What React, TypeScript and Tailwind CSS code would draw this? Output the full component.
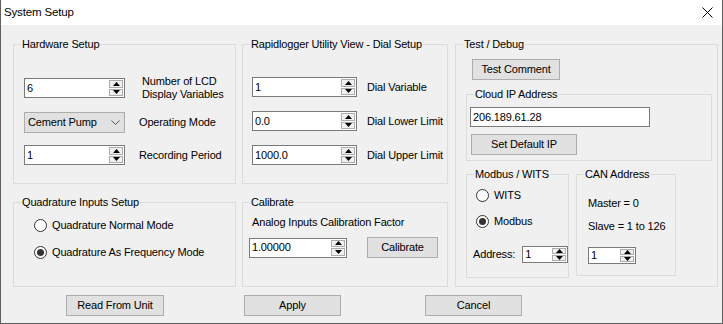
import React from 'react';

function Group({ title, className, children }: { title: string; className?: string; children?: React.ReactNode }) {
  return (
    <div className={`relative border border-[#dcdcdc] ${className ?? ''}`}>
      <span className="absolute left-[7px] -top-[8px] bg-[#f0f0f0] px-[1px] leading-[14px] whitespace-nowrap">{title}</span>
      {children}
    </div>
  );
}

function Arrow({ up }: { up?: boolean }) {
  return (
    <svg width="7" height="4" viewBox="0 0 7 4">
      <path d={up ? 'M0 4 L3.5 0 L7 4 Z' : 'M0 0 L3.5 4 L7 0 Z'} fill="#000" />
    </svg>
  );
}

function Spin({ value, className }: { value: string; className?: string }) {
  return (
    <div className={`flex border border-[#7a7a7a] bg-white ${className ?? ''}`}>
      <div className="flex-1 flex items-center pl-[2px] leading-none">{value}</div>
      <div className="flex flex-col w-[15px] py-[1px] pr-[1px] gap-[1px]">
        <div className="flex-1 flex items-center justify-center border border-[#acacac] bg-[#f0f0f0]">
          <Arrow up />
        </div>
        <div className="flex-1 flex items-center justify-center border border-[#acacac] bg-[#f0f0f0]">
          <Arrow />
        </div>
      </div>
    </div>
  );
}

function Button({ label, className }: { label: string; className?: string }) {
  return (
    <div className={`flex items-center justify-center border border-[#adadad] bg-[#e1e1e1] leading-none ${className ?? ''}`}>
      {label}
    </div>
  );
}

function Radio({ label, checked, className }: { label: string; checked?: boolean; className?: string }) {
  return (
    <div className={`flex items-center h-[13px] ${className ?? ''}`}>
      <span className="w-[13px] h-[13px] rounded-full border border-[#333] bg-white flex items-center justify-center">
        {checked && <span className="w-[7px] h-[7px] rounded-full bg-[#333]" />}
      </span>
      <span className="ml-[5px] leading-none whitespace-nowrap">{label}</span>
    </div>
  );
}

export default function App() {
  return (
    <div className="w-[723px] h-[324px] bg-[#f0f0f0] border-x border-b border-[#5f5f5f] text-[11px] tracking-[-0.15px] text-black font-['Liberation_Sans',Arial,sans-serif] overflow-hidden">
      {/* title bar */}
      <div className="h-[25px] bg-white flex items-center justify-between pl-[3px] pr-[9px]">
        <span className="text-[11.5px]">System Setup</span>
        <svg width="11" height="11" viewBox="0 0 11 11">
          <path d="M0.5 0.5 L10.5 10.5 M10.5 0.5 L0.5 10.5" stroke="#000" strokeWidth="1" />
        </svg>
      </div>

      <div className="flex pt-[19px] pl-[12px]">
        {/* left column */}
        <div className="w-[223px] flex flex-col">
          <Group title="Hardware Setup" className="h-[140px] pt-[33px] pl-[10px]">
            <div className="flex items-center h-[20px]">
              <Spin value="6" className="w-[101px] h-[20px]" />
              <div className="ml-[17px] leading-[13px]">
                <div>Number of LCD</div>
                <div>Display Variables</div>
              </div>
            </div>
            <div className="flex items-center h-[21px] mt-[14px]">
              <div className="w-[101px] h-[21px] flex items-center justify-between border border-[#adadad] bg-[#e1e1e1] pl-[3px] pr-[4px]">
                <span>Cement Pump</span>
                <svg width="9" height="5" viewBox="0 0 9 5">
                  <path d="M0.5 0.5 L4.5 4.5 L8.5 0.5" stroke="#555" fill="none" strokeWidth="1" />
                </svg>
              </div>
              <span className="ml-[14px]">Operating Mode</span>
            </div>
            <div className="flex items-center h-[20px] mt-[12px]">
              <Spin value="1" className="w-[101px] h-[20px]" />
              <span className="ml-[14px]">Recording Period</span>
            </div>
          </Group>
          <Group title="Quadrature Inputs Setup" className="mt-[18px] h-[85px] pt-[16px] pl-[20px]">
            <Radio label="Quadrature Normal Mode" />
            <Radio label="Quadrature As Frequency Mode" checked className="mt-[14px]" />
          </Group>
        </div>

        {/* middle column */}
        <div className="w-[206px] ml-[6px] flex flex-col">
          <Group title="Rapidlogger Utility View - Dial Setup" className="h-[140px] pt-[32px] pl-[9px]">
            <div className="flex items-center h-[20px]">
              <Spin value="1" className="w-[105px] h-[20px]" />
              <span className="ml-[10px]">Dial Variable</span>
            </div>
            <div className="flex items-center h-[20px] mt-[14px]">
              <Spin value="0.0" className="w-[105px] h-[20px]" />
              <span className="ml-[10px]">Dial Lower Limit</span>
            </div>
            <div className="flex items-center h-[20px] mt-[14px]">
              <Spin value="1000.0" className="w-[105px] h-[20px]" />
              <span className="ml-[10px]">Dial Upper Limit</span>
            </div>
          </Group>
          <Group title="Calibrate" className="mt-[18px] h-[85px] pt-[12px] pl-[9px]">
            <div className="leading-[14px]">Analog Inputs Calibration Factor</div>
            <div className="flex items-center h-[21px] mt-[8px] -ml-[3px]">
              <Spin value="1.00000" className="w-[98px] h-[20px]" />
              <Button label="Calibrate" className="ml-[20px] w-[71px] h-[21px]" />
            </div>
          </Group>
        </div>

        {/* right column */}
        <div className="w-[263px] ml-[7px]">
          <Group title="Test / Debug" className="h-[243px] pt-[14px] pl-[10px]">
            <Button label="Test Comment" className="ml-[6px] w-[88px] h-[21px]" />
            <Group title="Cloud IP Address" className="mt-[14px] w-[246px] h-[67px] pt-[12px] pl-[3px]">
              <div className="w-[180px] h-[20px] border border-[#7a7a7a] bg-white flex items-center pl-[2px]">206.189.61.28</div>
              <Button label="Set Default IP" className="mt-[7px] ml-[1px] w-[106px] h-[21px]" />
            </Group>
            <div className="flex mt-[13px]">
              <Group title="Modbus / WITS" className="w-[103px] h-[104px] pt-[14px] pl-[6px]">
                <Radio label="WITS" className="ml-[3px]" />
                <Radio label="Modbus" checked className="ml-[3px] mt-[13px]" />
                <div className="flex items-center h-[17px] mt-[18px]">
                  <span>Address:</span>
                  <Spin value="1" className="ml-[7px] w-[47px] h-[17px]" />
                </div>
              </Group>
              <Group title="CAN Address" className="ml-[7px] w-[100px] h-[102px] pt-[21px] pl-[11px]">
                <div className="leading-[14px]">Master = 0</div>
                <div className="leading-[14px] mt-[9px]">Slave = 1 to 126</div>
                <Spin value="1" className="mt-[14px] w-[48px] h-[17px]" />
              </Group>
            </div>
          </Group>
        </div>
      </div>

      {/* bottom buttons */}
      <div className="flex mt-[8px] pl-[65px]">
        <Button label="Read From Unit" className="w-[98px] h-[21px]" />
        <Button label="Apply" className="ml-[80px] w-[97px] h-[21px]" />
        <Button label="Cancel" className="ml-[84px] w-[97px] h-[21px]" />
      </div>
    </div>
  );
}
